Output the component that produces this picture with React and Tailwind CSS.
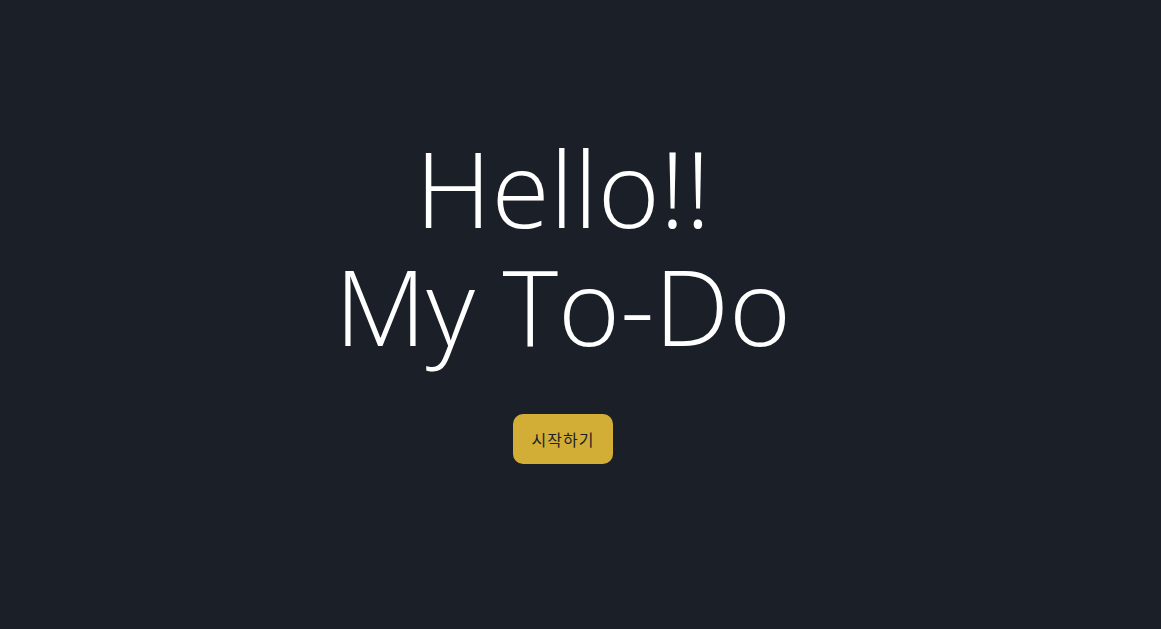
export default function App() {
  return (
    <div className="flex min-h-screen flex-col items-center justify-center bg-[#1b1f28] pr-[35px] pb-[38px] font-['Open_Sans','Noto_Sans_CJK_KR',sans-serif]">
      <h1 className="text-center text-[106px] font-light leading-[118px] text-white">
        Hello!!
        <br />
        My To-Do
      </h1>
      <button
        type="button"
        className="mt-[50px] h-[50px] w-[100px] rounded-[10px] bg-[#d3ae36] pt-[2px] text-[16px] tracking-[1px] text-[#1b1f28]"
      >
        시작하기
      </button>
    </div>
  )
}
